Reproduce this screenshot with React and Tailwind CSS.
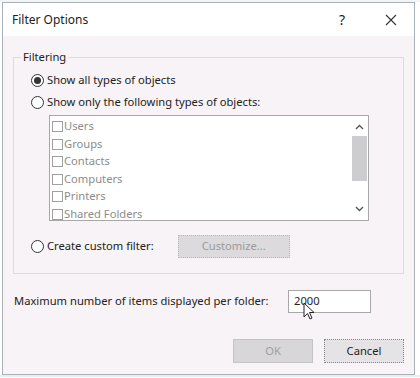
import React from "react";

const Radio = ({ checked }) => (
  <span className="w-[13px] h-[13px] rounded-full border border-[#333] bg-white flex items-center justify-center shrink-0">
    {checked && <span className="w-[7px] h-[7px] rounded-full bg-[#333]" />}
  </span>
);

const items = ["Users", "Groups", "Contacts", "Computers", "Printers", "Shared Folders"];

export default function App() {
  return (
    <div
      className="w-[420px] h-[378px] bg-white overflow-hidden text-[11.2px] text-[#222]"
      style={{ fontFamily: '"Noto Sans", "Open Sans", sans-serif' }}
    >
      <div className="h-[2px] bg-[#f4f4f4]" />
      <div className="ml-[2px] w-[413px] h-[373px] border border-[#a9b0b8] flex flex-col">
        {/* Title bar */}
        <div className="h-[33px] bg-white flex items-center pl-[9px] pr-[16px] text-[12px]">
          <span>Filter Options</span>
          <span className="ml-auto mr-[40px] text-[14px]">?</span>
          <svg width="12" height="12" viewBox="0 0 12 12" className="mr-[1px]">
            <path d="M1 1L11 11M11 1L1 11" stroke="#333" strokeWidth="1.1" />
          </svg>
        </div>

        {/* Body */}
        <div className="flex-1 bg-[#f8f3f6] px-[10px] pt-[13px]">
          <fieldset className="border border-[#dcdcdc] h-[225px] pl-[17px] pr-[34px]">
            <legend className="ml-[-10px] px-[2px] leading-[16px]">Filtering</legend>
            <div className="flex items-center gap-[3px] h-[16px] mt-[7px]">
              <Radio checked />
              <span>Show all types of objects</span>
            </div>
            <div className="flex items-center gap-[3px] h-[16px] mt-[6px]">
              <Radio />
              <span>Show only the following types of objects:</span>
            </div>

            {/* List box */}
            <div className="ml-[18px] mt-[5px] h-[106px] border border-[#a8a8a8] bg-white flex">
              <div className="flex-1 pl-[2px] pt-[2px] overflow-hidden">
                {items.map((it) => (
                  <div key={it} className="flex items-center h-[17.5px] text-[#8c8c8c]">
                    <span className="w-[11px] h-[11px] border border-[#a0a0a0] bg-white mr-[1px] shrink-0" />
                    <span>{it}</span>
                  </div>
                ))}
              </div>
              <div className="w-[17px] flex flex-col items-center py-[2px]">
                <svg width="9" height="6" viewBox="0 0 9 6" className="mt-[6px]">
                  <path d="M1 5L4.5 1.5L8 5" fill="none" stroke="#555" strokeWidth="1.4" />
                </svg>
                <div className="w-[15px] h-[45px] bg-[#cdcdcf] mt-[6px]" />
                <svg width="9" height="6" viewBox="0 0 9 6" className="mt-auto mb-[6px]">
                  <path d="M1 1L4.5 4.5L8 1" fill="none" stroke="#555" strokeWidth="1.4" />
                </svg>
              </div>
            </div>

            <div className="flex items-center mt-[14px]">
              <Radio />
              <span className="ml-[3px]">Create custom filter:</span>
              <button className="ml-[24px] w-[112px] h-[23px] bg-[#dcdadc] border border-dotted border-[#b8b8b8] text-[#9a9a9a]">
                Customize...
              </button>
            </div>
          </fieldset>

          <div className="flex items-center mt-[16px] pl-[1px]">
            <span>Maximum number of items displayed per folder:</span>
            <div className="ml-auto mr-[33px] w-[83px] h-[23px] border border-[#a8a8a8] bg-white flex items-center pl-[5px] relative">
              2000
              <svg width="14" height="20" viewBox="0 0 14 20" className="absolute left-[14px] top-[11px]">
                <path d="M1 1L1 15L4.5 11.5L7 17L9 16L6.5 10.5L11 10.5Z" fill="white" stroke="#222" strokeWidth="1" />
              </svg>
            </div>
          </div>

          <div className="flex justify-end gap-[11px] mt-[26px]">
            <button className="w-[80px] h-[24px] bg-[#d8d6d8] border border-[#c4c4c4] text-[#a0a0a0]">OK</button>
            <button className="w-[80px] h-[24px] bg-[#e6e3e6] border border-dotted border-[#8a8a8a]">Cancel</button>
          </div>
        </div>
      </div>
      <div className="h-[2px] bg-[#e3f1f5]" />
    </div>
  );
}
